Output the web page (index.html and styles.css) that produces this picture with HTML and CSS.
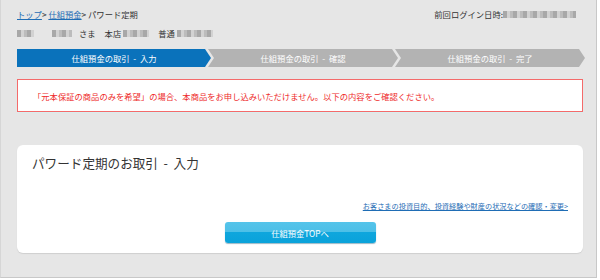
FILE: index.html
```html
<!DOCTYPE html>
<html lang="ja">
<head>
    <meta charset="UTF-8">
    <meta name="viewport" content="width=device-width, initial-scale=1.0">
    <title>パワード定期のお取引 - 入力</title>
    <link rel="stylesheet" href="styles.css">
</head>
<body>
    <div class="pagina">
        <div class="cabecalho">
            <div class="migalhas">
                <a href="#">トップ</a>&gt; <a href="#">仕組預金</a>&gt; パワード定期
            </div>
            <div class="login">前回ログイン日時:<span class="mosaico" style="width:73px"></span></div>
        </div>
        <div class="cliente">
            <span class="mosaico" style="width:17px"></span>
            <span class="mosaico m2" style="width:20px"></span>
            <span class="sama">さま</span>
            <span class="loja">本店</span><span class="mosaico" style="width:26px"></span>
            <span class="loja">普通</span><span class="mosaico" style="width:36px"></span>
        </div>

        <div class="etapas">
            <div class="etapa ativa">仕組預金の取引 &nbsp;- &nbsp;入力</div>
            <div class="etapa">仕組預金の取引 &nbsp;- &nbsp;確認</div>
            <div class="etapa">仕組預金の取引 &nbsp;- &nbsp;完了</div>
        </div>

        <div class="erro">「元本保証の商品のみを希望」の場合、本商品をお申し込みいただけません。以下の内容をご確認ください。</div>

        <div class="cartao">
            <h1 class="titulo">パワード定期のお取引 &nbsp;- &nbsp;入力</h1>
            <div class="link-linha">
                <a href="#">お客さまの投資目的、投資経験や財産の状況などの確認・変更&gt;</a>
            </div>
            <div class="botao-linha">
                <button class="botao">仕組預金TOPへ</button>
            </div>
        </div>
    </div>
</body>
</html>
```

FILE: styles.css
```css
body {
    margin: 0;
    font-family: "Noto Sans CJK JP", "Noto Sans", sans-serif;
    font-size: 8.3px;
    color: #333;
    background-color: #fff;
}

.pagina {
    width: 597px;
    height: 278px;
    background-color: #e6e6e6;
    border-left: 1px solid #d6d6d6;
    border-right: 1px solid #c8c8c8;
    border-bottom: 1px solid #c8c8c8;
    padding: 8px 0 0 16px;
    box-sizing: border-box;
    overflow: hidden;
}

.cabecalho {
    display: flex;
    justify-content: space-between;
    align-items: center;
    height: 12px;
    line-height: 12px;
    padding-right: 20px;
}

.migalhas a {
    color: #1f6db5;
}

.login {
    display: flex;
    align-items: center;
}

.mosaico {
    display: inline-block;
    height: 7px;
    background: repeating-linear-gradient(90deg, #a8a8a8 0 4px, #d2d2d2 4px 7px, #bcbcbc 7px 10px);
    filter: blur(0.7px);
    vertical-align: middle;
}

.cliente {
    display: flex;
    align-items: center;
    height: 12px;
    margin-top: 7px;
}

.m2 {
    margin-left: 18px;
}

.sama {
    margin-left: 7px;
}

.loja {
    margin-left: 9px;
    margin-right: 2px;
}

.etapas {
    display: flex;
    margin-top: 10px;
    height: 18px;
}

.etapa {
    width: 190px;
    margin-left: -3px;
    display: flex;
    align-items: center;
    justify-content: center;
    color: #fff;
    background-color: #b3b3b3;
    clip-path: polygon(0 0, calc(100% - 6px) 0, 100% 50%, calc(100% - 6px) 100%, 0 100%, 6px 50%);
}

.etapa.ativa {
    width: 194px;
    margin-left: 0;
    background-color: #0a72bb;
    clip-path: polygon(0 0, calc(100% - 6px) 0, 100% 50%, calc(100% - 6px) 100%, 0 100%);
}

.erro {
    width: 566px;
    height: 33px;
    margin-top: 12px;
    box-sizing: border-box;
    border: 1px solid #f46a6a;
    box-shadow: 0 1px 0 #d8eef0;
    background-color: #fff;
    color: #ee2a2a;
    display: flex;
    align-items: center;
    padding-left: 15px;
}

.cartao {
    width: 566px;
    height: 108px;
    margin-top: 33px;
    box-sizing: border-box;
    background-color: #fff;
    border-radius: 6px;
    box-shadow: 0 1px 1px #cfcfcf;
    padding: 10px 15px 0 15px;
}

.titulo {
    margin: 0;
    font-size: 12.6px;
    font-weight: normal;
    line-height: 16px;
    color: #333;
}

.link-linha {
    margin-top: 30px;
    text-align: right;
    line-height: 10px;
    font-size: 7.2px;
}

.link-linha a {
    color: #1f6db5;
}

.botao-linha {
    margin-top: 11px;
    display: flex;
    justify-content: center;
}

.botao {
    width: 151px;
    height: 21px;
    border: none;
    border-radius: 3px;
    background: linear-gradient(#55c4ea 0%, #4cbfe7 50%, #0ea6dd 50%, #0aa2da 100%);
    box-shadow: 0 1px 1px #9bb8c6;
    color: #fff;
    font-family: inherit;
    font-size: 8.3px;
    cursor: pointer;
}
```
